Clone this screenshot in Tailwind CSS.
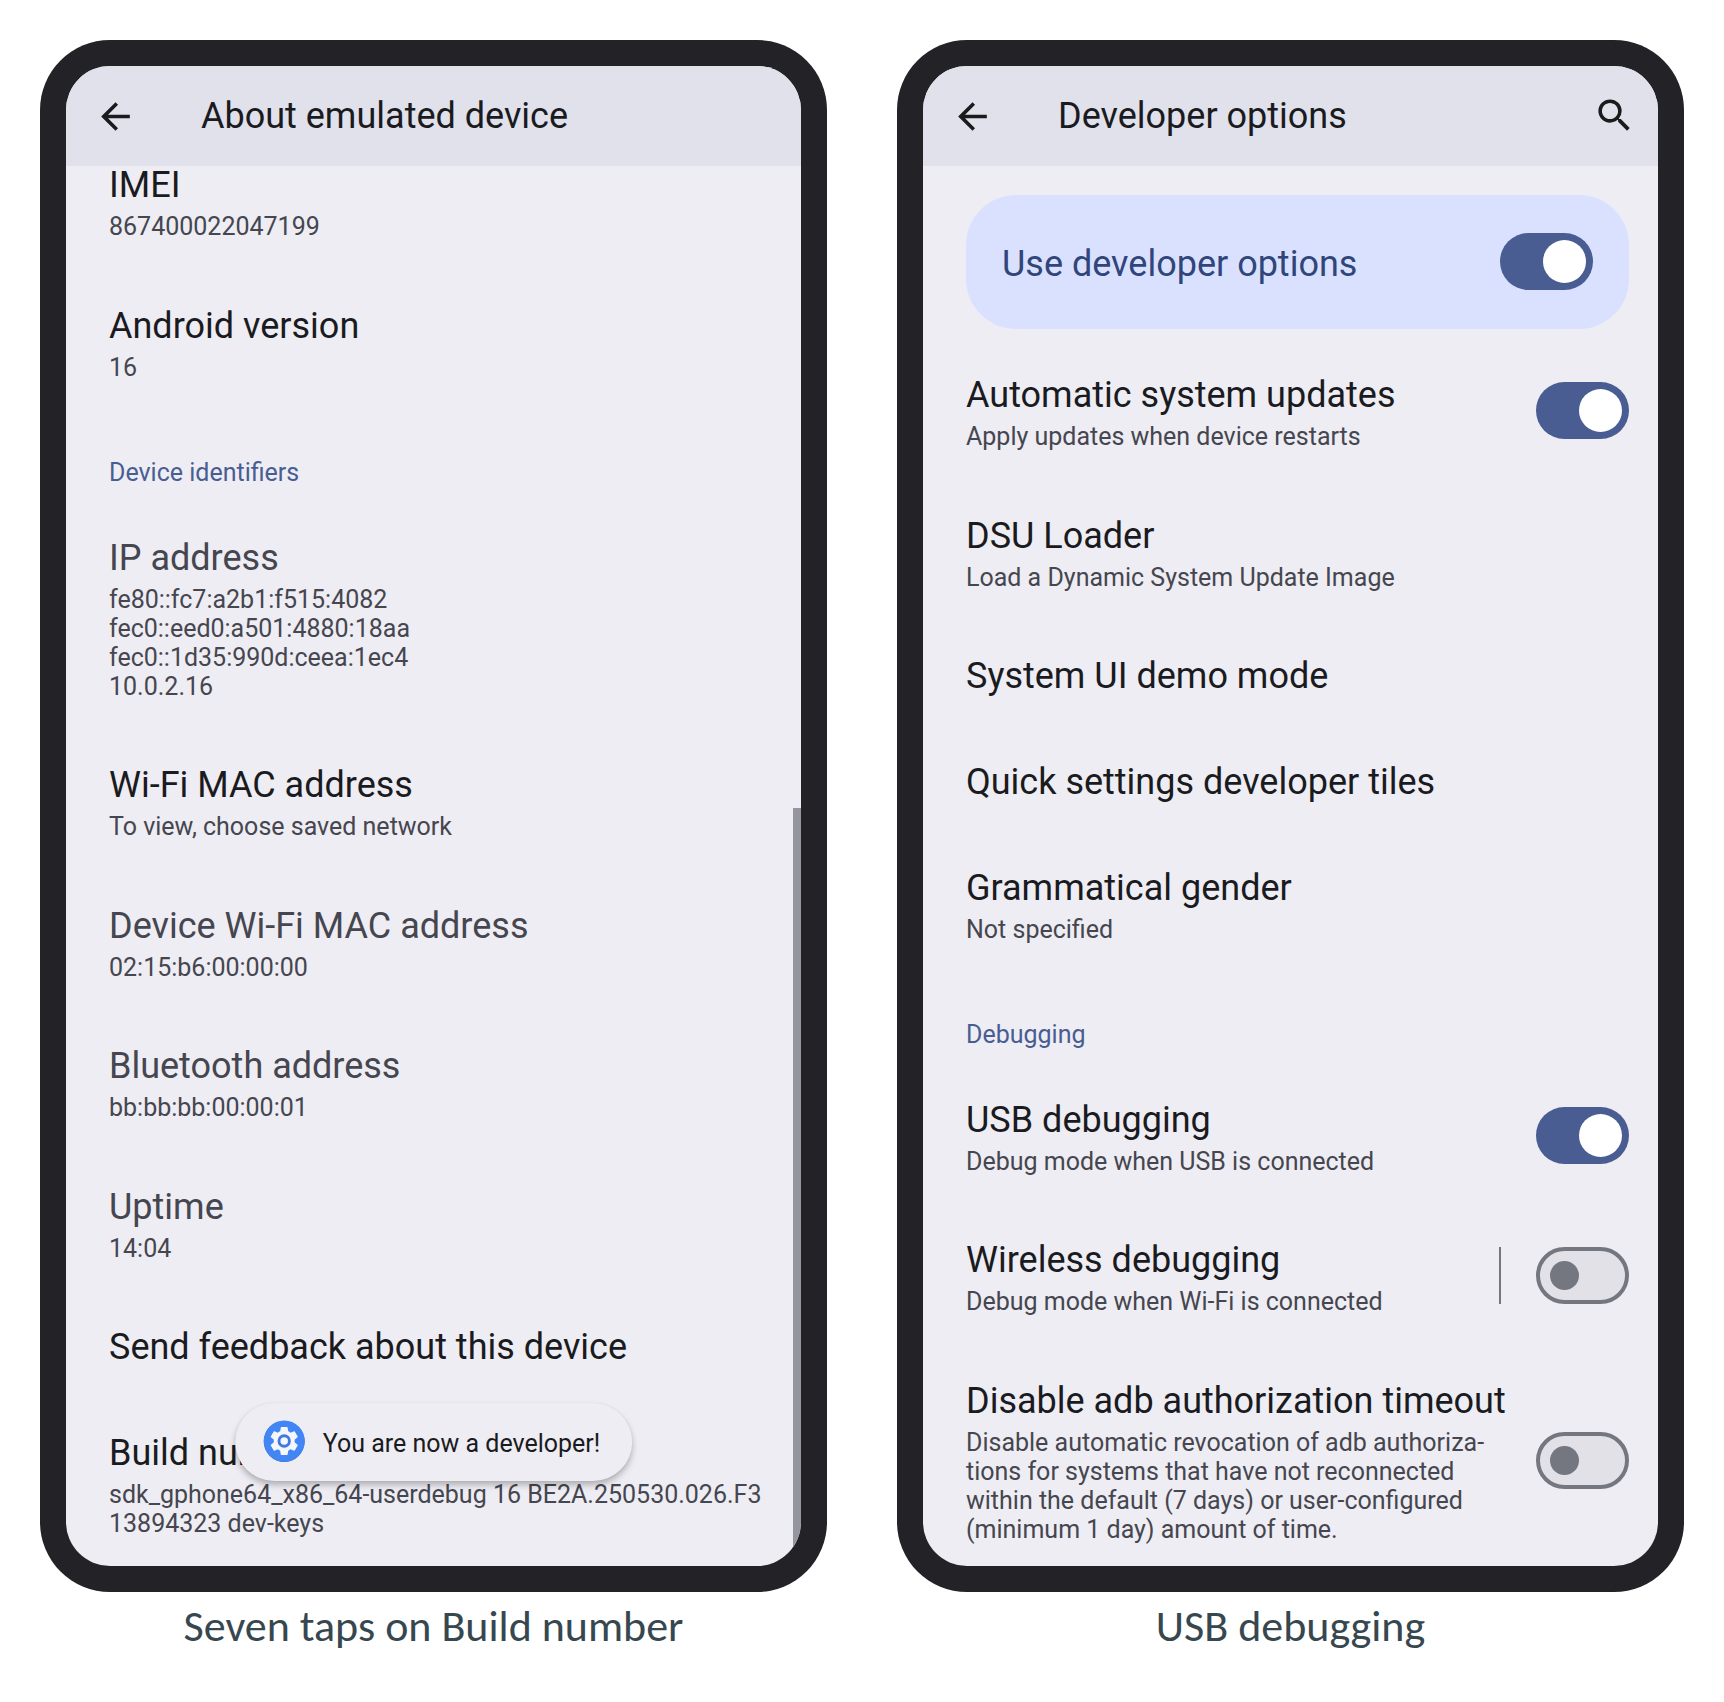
<!DOCTYPE html>
<html lang="en">
<head>
<meta charset="utf-8">
<meta name="viewport" content="width=device-width, initial-scale=1">
<title>Enabling USB debugging</title>
<script src="https://cdn.jsdelivr.net/npm/@tailwindcss/browser@4"></script>
</head>
<body class="bg-white font-['Roboto',sans-serif] text-[#1a1b21]">
<main class="grid grid-cols-2 gap-x-[70px] p-10">

  <!-- About emulated device -->
  <figure class="flex flex-col">
    <div class="aspect-[787/1552] rounded-[70px] bg-[#232227] p-[26px]">
      <div class="relative flex h-full flex-col overflow-hidden rounded-[44px] bg-[#eeedf3]">
        <header class="flex h-[100px] shrink-0 items-center bg-[#e1e1eb] pl-7 pr-[22px]">
          <button type="button" aria-label="Back" class="mr-16 size-[43px]">
            <svg viewBox="0 0 24 24" class="size-full" fill="#1a1b1c"><path d="M20 11H7.83l5.59-5.59L12 4l-8 8 8 8 1.41-1.41L7.83 13H20z"/></svg>
          </button>
          <h1 class="text-[36px] leading-[42px]">About emulated device</h1>
        </header>
        <ul class="-mt-0.5 flex flex-1 flex-col justify-between pb-7 pl-[43px] pr-[29px] text-[25px] leading-[29px] text-[#45464f]">
          <li class="pb-8"><h2 class="mb-1.5 text-[36px] leading-[42px] text-[#1a1b21]">IMEI</h2><p>867400022047199</p></li>
          <li class="pt-[31px] pb-8"><h2 class="mb-1.5 text-[36px] leading-[42px] text-[#1a1b21]">Android version</h2><p>16</p></li>
          <li class="pt-11 pb-[18px] text-[#485d92]">Device identifiers</li>
          <li class="pt-[31px] pb-8"><h2 class="mb-1.5 text-[36px] leading-[42px]">IP address</h2><p>fe80::fc7:a2b1:f515:4082<br>fec0::eed0:a501:4880:18aa<br>fec0::1d35:990d:ceea:1ec4<br>10.0.2.16</p></li>
          <li class="pt-[31px] pb-8"><h2 class="mb-1.5 text-[36px] leading-[42px] text-[#1a1b21]">Wi-Fi MAC address</h2><p>To view, choose saved network</p></li>
          <li class="pt-[31px] pb-8"><h2 class="mb-1.5 text-[36px] leading-[42px]">Device Wi-Fi MAC address</h2><p>02:15:b6:00:00:00</p></li>
          <li class="pt-[31px] pb-8"><h2 class="mb-1.5 text-[36px] leading-[42px]">Bluetooth address</h2><p>bb:bb:bb:00:00:01</p></li>
          <li class="pt-[31px] pb-8"><h2 class="mb-1.5 text-[36px] leading-[42px]">Uptime</h2><p>14:04</p></li>
          <li class="pt-[31px] pb-8"><h2 class="text-[36px] leading-[42px] text-[#1a1b21]">Send feedback about this device</h2></li>
          <li class="pt-[31px]"><h2 class="mb-1.5 text-[36px] leading-[42px] text-[#1a1b21]">Build number</h2><p>sdk_gphone64_x86_64-userdebug 16 BE2A.250530.026.F3 13894323 dev-keys</p></li>
        </ul>
        <!-- scroll thumb -->
        <div class="absolute right-0 bottom-0 h-[758px] w-2 bg-[#94959e]"></div>
        <!-- toast -->
        <div role="status" class="absolute bottom-[85px] left-1/2 flex h-[78px] -translate-x-1/2 items-center gap-[18px] rounded-full bg-[#eeedf3] pr-8 pl-7 text-[25px] leading-[29px] whitespace-nowrap shadow-[0_4px_6px_rgba(0,0,0,0.26),0_0_2px_rgba(0,0,0,0.06)]">
          <svg viewBox="0 0 42 42" class="mb-0.5 size-[42px]">
            <circle cx="21" cy="21.5" r="20.5" fill="#3b6fc9"/>
            <circle cx="21" cy="21" r="20.5" fill="#4285f4"/>
            <g transform="translate(3.6 3.6) scale(1.45)"><path fill="#f5f6fa" d="M19.14 12.94c.04-.3.06-.61.06-.94 0-.32-.02-.64-.07-.94l2.03-1.58a.49.49 0 0 0 .12-.61l-1.92-3.32a.488.488 0 0 0-.59-.22l-2.39.96c-.5-.38-1.03-.7-1.62-.94l-.36-2.54a.484.484 0 0 0-.48-.41h-3.84c-.24 0-.43.17-.47.41l-.36 2.54c-.59.24-1.13.57-1.62.94l-2.39-.96c-.22-.08-.47 0-.59.22L2.74 8.87c-.12.21-.08.47.12.61l2.03 1.58c-.05.3-.09.63-.09.94s.02.64.07.94l-2.03 1.58a.49.49 0 0 0-.12.61l1.92 3.32c.12.22.37.29.59.22l2.39-.96c.5.38 1.03.7 1.62.94l.36 2.54c.05.24.24.41.48.41h3.84c.24 0 .44-.17.47-.41l.36-2.54c.59-.24 1.13-.56 1.62-.94l2.39.96c.22.08.47 0 .59-.22l1.92-3.32c.12-.22.07-.47-.12-.61z"/><circle cx="12" cy="12" r="3.6" fill="#f5f6fa" stroke="#4079e0" stroke-width="2"/></g>
          </svg>
          <span class="mt-0.5">You are now a developer!</span>
        </div>
      </div>
    </div>
    <figcaption class="mt-2 text-center font-['Carlito','Open_Sans',sans-serif] text-[44px] leading-[52px] text-[#37474f]">Seven taps on Build number</figcaption>
  </figure>

  <!-- Developer options -->
  <figure class="flex flex-col">
    <div class="aspect-[787/1552] rounded-[70px] bg-[#232227] p-[26px]">
      <div class="flex h-full flex-col overflow-hidden rounded-[44px] bg-[#eeedf3]">
        <header class="flex h-[100px] shrink-0 items-center bg-[#e1e1eb] pl-7 pr-[22px]">
          <button type="button" aria-label="Back" class="mr-16 size-[43px]">
            <svg viewBox="0 0 24 24" class="size-full" fill="#1a1b1c"><path d="M20 11H7.83l5.59-5.59L12 4l-8 8 8 8 1.41-1.41L7.83 13H20z"/></svg>
          </button>
          <h1 class="flex-1 text-[36px] leading-[42px]">Developer options</h1>
          <button type="button" aria-label="Search" class="mb-0.5 size-[43px]">
            <svg viewBox="0 0 24 24" class="size-full" fill="#1a1b1c"><path d="M15.5 14h-.79l-.28-.27A6.471 6.471 0 0 0 16 9.5 6.5 6.5 0 1 0 9.5 16c1.61 0 3.09-.59 4.23-1.57l.27.28v.79l5 4.99L20.49 19l-4.99-5zm-6 0C7.01 14 5 11.99 5 9.5S7.01 5 9.5 5 14 7.01 14 9.5 11.99 14 9.5 14z"/></svg>
          </button>
        </header>
        <div class="mt-[29px] mr-[29px] mb-3.5 ml-[43px] flex h-[134px] shrink-0 items-center justify-between rounded-[50px] bg-[#dae1ff] px-9">
          <label for="dev" class="mt-[3px] text-[36px] leading-[42px] text-[#30467a]">Use developer options</label>
          <input id="dev" type="checkbox" role="switch" checked class="mb-0.5 flex h-[57px] w-[93px] shrink-0 appearance-none items-center rounded-full border-4 border-[#74777f] bg-[#e2e1e8] pl-2.5 before:size-[29px] before:rounded-full before:bg-[#74777f] before:content-[''] checked:justify-end checked:border-0 checked:bg-[#495d92] checked:pr-[7px] checked:before:size-[43px] checked:before:bg-white">
        </div>
        <ul class="flex flex-1 flex-col justify-between pb-[22px] pl-[43px] pr-[29px] text-[25px] leading-[29px] text-[#45464f]">
          <li class="flex items-center justify-between pt-[31px] pb-8">
            <div><label for="auto" class="mb-1.5 block text-[36px] leading-[42px] text-[#1a1b21]">Automatic system updates</label><p>Apply updates when device restarts</p></div>
            <input id="auto" type="checkbox" role="switch" checked class="mb-1 flex h-[57px] w-[93px] shrink-0 appearance-none items-center rounded-full border-4 border-[#74777f] bg-[#e2e1e8] pl-2.5 before:size-[29px] before:rounded-full before:bg-[#74777f] before:content-[''] checked:justify-end checked:border-0 checked:bg-[#495d92] checked:pr-[7px] checked:before:size-[43px] checked:before:bg-white">
          </li>
          <li class="pt-[31px] pb-8"><h2 class="mb-1.5 text-[36px] leading-[42px] text-[#1a1b21]">DSU Loader</h2><p>Load a Dynamic System Update Image</p></li>
          <li class="pt-[31px] pb-8"><h2 class="text-[36px] leading-[42px] text-[#1a1b21]">System UI demo mode</h2></li>
          <li class="pt-[31px] pb-8"><h2 class="text-[36px] leading-[42px] text-[#1a1b21]">Quick settings developer tiles</h2></li>
          <li class="pt-[31px] pb-8"><h2 class="mb-1.5 text-[36px] leading-[42px] text-[#1a1b21]">Grammatical gender</h2><p>Not specified</p></li>
          <li class="pt-11 pb-[18px] text-[#485d92]">Debugging</li>
          <li class="flex items-center justify-between pt-[31px] pb-8">
            <div><label for="usb" class="mb-1.5 block text-[36px] leading-[42px] text-[#1a1b21]">USB debugging</label><p>Debug mode when USB is connected</p></div>
            <input id="usb" type="checkbox" role="switch" checked class="mb-1 flex h-[57px] w-[93px] shrink-0 appearance-none items-center rounded-full border-4 border-[#74777f] bg-[#e2e1e8] pl-2.5 before:size-[29px] before:rounded-full before:bg-[#74777f] before:content-[''] checked:justify-end checked:border-0 checked:bg-[#495d92] checked:pr-[7px] checked:before:size-[43px] checked:before:bg-white">
          </li>
          <li class="flex items-center pt-[31px] pb-8">
            <div class="flex-1"><label for="wifi" class="mb-1.5 block text-[36px] leading-[42px] text-[#1a1b21]">Wireless debugging</label><p>Debug mode when Wi-Fi is connected</p></div>
            <div class="mr-[35px] mb-1 h-[57px] w-0.5 bg-[#74777f]"></div>
            <input id="wifi" type="checkbox" role="switch" class="mb-1 flex h-[57px] w-[93px] shrink-0 appearance-none items-center rounded-full border-4 border-[#74777f] bg-[#e2e1e8] pl-2.5 before:size-[29px] before:rounded-full before:bg-[#74777f] before:content-[''] checked:justify-end checked:border-0 checked:bg-[#495d92] checked:pr-[7px] checked:before:size-[43px] checked:before:bg-white">
          </li>
          <li class="flex items-center justify-between gap-6 pt-[31px]">
            <div><label for="adb" class="mb-1.5 block text-[36px] leading-[42px] whitespace-nowrap text-[#1a1b21]">Disable adb authorization timeout</label><p>Disable automatic revocation of adb authoriza&shy;tions for systems that have not reconnected within the default (7 days) or user-configured (minimum 1 day) amount of time.</p></div>
            <input id="adb" type="checkbox" role="switch" class="mb-1 flex h-[57px] w-[93px] shrink-0 appearance-none items-center rounded-full border-4 border-[#74777f] bg-[#e2e1e8] pl-2.5 before:size-[29px] before:rounded-full before:bg-[#74777f] before:content-[''] checked:justify-end checked:border-0 checked:bg-[#495d92] checked:pr-[7px] checked:before:size-[43px] checked:before:bg-white">
          </li>
        </ul>
      </div>
    </div>
    <figcaption class="mt-2 text-center font-['Carlito','Open_Sans',sans-serif] text-[44px] leading-[52px] text-[#37474f]">USB debugging</figcaption>
  </figure>

</main>
</body>
</html>
